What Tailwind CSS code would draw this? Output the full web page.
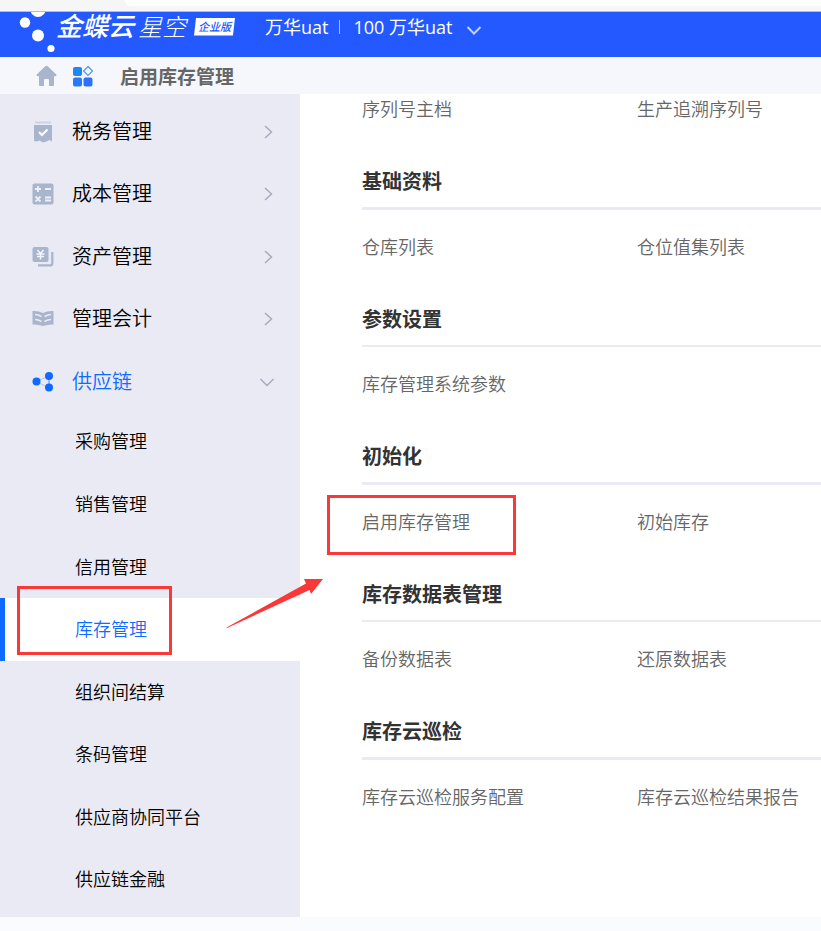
<!DOCTYPE html>
<html lang="zh-CN">
<head>
  <meta charset="UTF-8" />
  <meta name="viewport" content="width=device-width, initial-scale=1" />
  <title>启用库存管理</title>
  <script src="https://cdn.jsdelivr.net/npm/@tailwindcss/browser@4"></script>
</head>
<body class="relative min-h-screen flex flex-col bg-[#fafbfe] font-['Open_Sans','Noto_Sans_CJK_SC',sans-serif] text-black">
  <!-- Browser edge -->
  <div class="h-3 bg-[#f6f6f6] border-b border-[#b9bcc6] pl-[125px]">
    <div class="h-[6px] bg-white rounded-bl-md"></div>
  </div>

  <!-- Header -->
  <header class="h-[45px] bg-[#2459ff] text-white flex items-start">
    <svg class="w-14 h-[45px] shrink-0" viewBox="0 0 56 45" fill="#fff" aria-hidden="true">
      <circle cx="25" cy="10.5" r="5.2" />
      <circle cx="38" cy="-2.5" r="7.5" />
      <circle cx="38" cy="23.5" r="6" />
      <circle cx="51" cy="36.5" r="3.6" />
    </svg>
    <div class="flex w-[209px] shrink-0 items-center h-[29px] whitespace-nowrap">
      <span class="text-[26px] leading-[29px] font-medium italic">金蝶云</span>
      <span class="text-[24px] leading-[29px] font-light italic ml-1">星空</span>
      <span class="ml-2 w-[41px] h-[18px] bg-white text-[#2459ff] text-[11px] leading-[18px] font-medium italic text-center [clip-path:polygon(5%_0,100%_0,95%_100%,0_100%)]">企业版</span>
    </div>
    <button class="flex items-center h-[30px] text-[18px] leading-[30px] whitespace-nowrap">
      <span>万华uat</span>
      <span class="w-px h-[14px] bg-white/60 ml-[11px] mr-[13px]"></span>
      <span>100 万华uat</span>
      <svg class="w-4 h-4 ml-[14px] mt-1.5" viewBox="0 0 16 16" fill="none" stroke="#c3d1ff" stroke-width="2"><path d="M1.500 5L8 11.500L14.500 5" /></svg>
    </button>
  </header>

  <!-- Tabs -->
  <nav class="h-[37px] bg-[#f5f7fc] flex items-center pl-9">
    <a href="#" aria-label="首页">
      <svg class="w-[21px] h-[22px]" viewBox="0 0 21 22" fill="#a9b4cd"><path d="M9.300 1.300Q10.500.3 11.700 1.300L20.300 9.500Q21 11 19.500 11.300H18V20Q18 21 17 21H13V15Q13 14 12 14H9Q8 14 8 15V21H4Q3 21 3 20V11.300H1.500Q0 11 .7 9.500Z" /></svg>
    </a>
    <a href="#" aria-label="应用" class="ml-[15px] pt-px">
      <svg class="w-[22px] h-[22px]" viewBox="0 0 22 22">
        <rect x="1" y="2" width="9" height="9" rx="2" fill="#1e86f5" />
        <rect x="1" y="12.500" width="9" height="9" rx="2" fill="#2a78f8" />
        <rect x="11.500" y="12.500" width="9" height="9" rx="2" fill="#2f6ffb" />
        <path d="M16 1.500L20.500 6L16 10.500L11.500 6Z" fill="none" stroke="#4c94f8" stroke-width="1.200" />
      </svg>
    </a>
    <a href="#" class="ml-[26px] pt-0.5 text-[19px] leading-7 font-bold text-[#666]">启用库存管理</a>
  </nav>

  <div class="flex-1 flex mb-[14px] bg-white">
    <!-- Sidebar -->
    <aside class="w-[300px] shrink-0 bg-[#e9eaf4] pt-1 pb-1.5 grid auto-rows-fr text-[18px] font-[350]">
      <button class="min-h-[62px] pt-[5px] pl-8 pr-6 flex items-center text-left text-[20px]">
        <svg class="w-[22px] h-[22px] mr-[18px]" viewBox="0 0 22 22"><path d="M3 1.500H19" stroke="#ccd3e3" stroke-width="2" /><path d="M2 4H20V20.500L17.500 19L14.500 20.500L11 21.500L7.500 19.500L5 20.500L2 20Z" fill="#a9b4cd" /><path d="M7 11L10 14L15.500 8.500" fill="none" stroke="#fff" stroke-width="2" /></svg>
        <span class="flex-1">税务管理</span>
        <svg class="w-4 h-4" viewBox="0 0 16 16" fill="none" stroke="#a4a9ba" stroke-width="1.400"><path d="M5 2L11.500 8L5 14" /></svg>
      </button>
      <button class="min-h-[62px] pt-[5px] pl-8 pr-6 flex items-center text-left text-[20px]">
        <svg class="w-[22px] h-[22px] mr-[18px]" viewBox="0 0 22 22"><rect x=".5" y=".5" width="21" height="21" rx="2" fill="#a9b4cd" /><path d="M6 3V9M3 6H9M13 6H19M3.500 13.500L8.500 18.500M8.500 13.500L3.500 18.500M13 14.500H19M13 17.500H19" stroke="#eef0f7" stroke-width="1.800" /></svg>
        <span class="flex-1">成本管理</span>
        <svg class="w-4 h-4" viewBox="0 0 16 16" fill="none" stroke="#a4a9ba" stroke-width="1.400"><path d="M5 2L11.500 8L5 14" /></svg>
      </button>
      <button class="min-h-[62px] pt-[5px] pl-8 pr-6 flex items-center text-left text-[20px]">
        <svg class="w-[22px] h-[22px] mr-[18px]" viewBox="0 0 22 22"><rect x=".5" y="1" width="16" height="15" rx="2" fill="#a9b4cd" /><path d="M20.300 6V17.500Q20.300 19.300 18.500 19.300H6" fill="none" stroke="#a9b4cd" stroke-width="2.200" /><path d="M5.500 4L8.500 7.500L11.500 4M4.500 8H12.500M5 10.500H12M8.500 7.500V13.500" fill="none" stroke="#f2f4f9" stroke-width="1.500" /></svg>
        <span class="flex-1">资产管理</span>
        <svg class="w-4 h-4" viewBox="0 0 16 16" fill="none" stroke="#a4a9ba" stroke-width="1.400"><path d="M5 2L11.500 8L5 14" /></svg>
      </button>
      <button class="min-h-[62px] pt-[5px] pl-8 pr-6 flex items-center text-left text-[20px]">
        <svg class="w-[22px] h-[22px] mr-[18px]" viewBox="0 0 22 22"><path d="M.5 3Q6 2.500 11 5Q16 2.500 21.500 3V16.500Q16 16 11 18Q6 16 .5 16.500Z" fill="#a9b4cd" /><path d="M3 6.500Q6 6.500 9.500 8.500M3 11.500Q6 11.500 9.500 13.500M19 6.500Q16 6.500 12.500 8.500M19 11.500Q16 11.500 12.500 13.500" fill="none" stroke="#e9eaf4" stroke-width="1.700" /></svg>
        <span class="flex-1">管理会计</span>
        <svg class="w-4 h-4" viewBox="0 0 16 16" fill="none" stroke="#a4a9ba" stroke-width="1.400"><path d="M5 2L11.500 8L5 14" /></svg>
      </button>
      <button class="min-h-[62px] pt-[5px] pl-8 pr-6 flex items-center text-left text-[20px] text-[#0f6bff]" aria-expanded="true">
        <svg class="w-[22px] h-[22px] mr-[18px]" viewBox="0 0 22 22" fill="#0f6bff"><path d="M4.500 10.500L17 5V17Z" fill="none" stroke="#a9c8fb" /><path d="M17 5V17" stroke="#5f9dfd" /><circle cx="4.500" cy="10.500" r="4" /><circle cx="17" cy="5" r="4" /><circle cx="17" cy="16.500" r="4" /></svg>
        <span class="flex-1">供应链</span>
        <svg class="w-4 h-4" viewBox="0 0 16 16" fill="none" stroke="#a4a9ba" stroke-width="1.400"><path d="M.5 5L7 11.500L13.500 5" /></svg>
      </button>
      <a href="#" class="min-h-[62px] pl-[75px] flex items-center">采购管理</a>
      <a href="#" class="min-h-[62px] pl-[75px] flex items-center">销售管理</a>
      <a href="#" class="min-h-[62px] pl-[75px] flex items-center">信用管理</a>
      <a href="#" class="min-h-[62px] pl-[70px] flex items-center bg-white border-l-[5px] border-[#0f6bff] text-[#0f6bff]">库存管理</a>
      <a href="#" class="min-h-[62px] pl-[75px] flex items-center">组织间结算</a>
      <a href="#" class="min-h-[62px] pl-[75px] flex items-center">条码管理</a>
      <a href="#" class="min-h-[62px] pl-[75px] flex items-center">供应商协同平台</a>
      <a href="#" class="min-h-[62px] pl-[75px] flex items-center">供应链金融</a>
    </aside>

    <!-- Function list -->
    <main class="flex-1 min-w-0 pl-[62px] pt-[3px] pb-[88px] flex flex-col text-[18px] leading-6 font-[350] text-[#666]">
      <div class="grid grid-cols-[275px_1fr] pb-5 whitespace-nowrap">
        <a href="#">序列号主档</a>
        <a href="#">生产追溯序列号</a>
      </div>
      <section class="flex-1 basis-0 pt-[26px]">
        <h2 class="text-[20px] leading-[30px] font-bold text-[#333] pb-2.5 border-b-[3px] border-[#e9eaf4]">基础资料</h2>
        <div class="grid grid-cols-[275px_1fr] pt-[25px] whitespace-nowrap">
          <a href="#">仓库列表</a>
          <a href="#">仓位值集列表</a>
        </div>
      </section>
      <section class="flex-1 basis-0 pt-[26px]">
        <h2 class="text-[20px] leading-[30px] font-bold text-[#333] pb-2.5 border-b-2 border-[#e9eaf4]">参数设置</h2>
        <div class="grid grid-cols-[275px_1fr] pt-[25px] whitespace-nowrap">
          <a href="#">库存管理系统参数</a>
        </div>
      </section>
      <section class="flex-1 basis-0 pt-[26px]">
        <h2 class="text-[20px] leading-[30px] font-bold text-[#333] pb-2.5 border-b-[3px] border-[#e9eaf4]">初始化</h2>
        <div class="grid grid-cols-[275px_1fr] pt-[25px] whitespace-nowrap">
          <a href="#">启用库存管理</a>
          <a href="#">初始库存</a>
        </div>
      </section>
      <section class="flex-1 basis-0 pt-[26px]">
        <h2 class="text-[20px] leading-[30px] font-bold text-[#333] pb-2.5 border-b-2 border-[#e9eaf4]">库存数据表管理</h2>
        <div class="grid grid-cols-[275px_1fr] pt-[25px] whitespace-nowrap">
          <a href="#">备份数据表</a>
          <a href="#">还原数据表</a>
        </div>
      </section>
      <section class="flex-1 basis-0 pt-[26px]">
        <h2 class="text-[20px] leading-[30px] font-bold text-[#333] pb-2.5 border-b-[3px] border-[#e9eaf4]">库存云巡检</h2>
        <div class="grid grid-cols-[275px_1fr] pt-[25px] whitespace-nowrap">
          <a href="#">库存云巡检服务配置</a>
          <a href="#">库存云巡检结果报告</a>
        </div>
      </section>
    </main>
  </div>

  <!-- Callouts -->
  <div class="absolute left-[17px] top-[586px] w-[155px] h-[69px] border-3 border-[#fa3838] pointer-events-none"></div>
  <div class="absolute left-[327px] top-[495px] w-[189px] h-[60px] border-3 border-[#fa3838] pointer-events-none"></div>
  <svg class="absolute left-[226px] top-[578px] w-[98px] h-[51px] pointer-events-none" viewBox="0 0 98 51" fill="#fa3838" aria-hidden="true">
    <path d="M.5 49.500L80 5.500L78 1L97 1L85 16L83.500 12L1 50Z" />
  </svg>
</body>
</html>
